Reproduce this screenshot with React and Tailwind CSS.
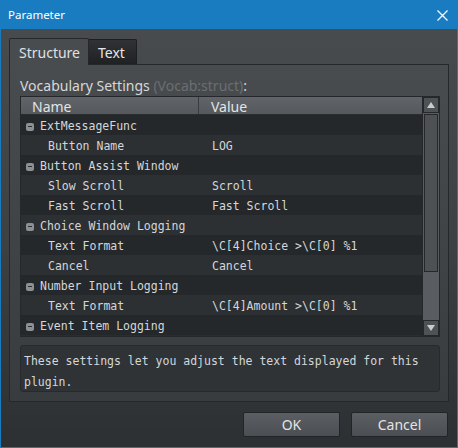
import React from "react";

const ROWS = [
  { group: true, name: "ExtMessageFunc" },
  { name: "Button Name", value: "LOG" },
  { group: true, name: "Button Assist Window" },
  { name: "Slow Scroll", value: "Scroll" },
  { name: "Fast Scroll", value: "Fast Scroll" },
  { group: true, name: "Choice Window Logging" },
  { name: "Text Format", value: "\\C[4]Choice >\\C[0] %1" },
  { name: "Cancel", value: "Cancel" },
  { group: true, name: "Number Input Logging" },
  { name: "Text Format", value: "\\C[4]Amount >\\C[0] %1" },
  { group: true, name: "Event Item Logging" },
];

const sans = { fontFamily: '"Noto Sans", "Open Sans", sans-serif' };
const mono = { fontFamily: '"DejaVu Sans Mono", "Liberation Mono", monospace' };

const Minus = () => (
  <span className="w-[8px] h-[8px] rounded-[2px] bg-[#8d9093] flex items-center justify-center mr-[6px]">
    <span className="w-[4px] h-[1px] bg-[#2a2d30]" />
  </span>
);

export default function App() {
  return (
    <div
      className="w-[458px] h-[448px] border border-[#1a7cc0] flex flex-col overflow-hidden"
      style={sans}
    >
      {/* Title bar */}
      <div className="h-[28px] bg-[#1a7cc0] flex items-center justify-between pl-[7px] pr-[9px]">
        <span className="text-white text-[11.5px]">Parameter</span>
        <svg width="11" height="11" viewBox="0 0 11 11">
          <path d="M0.5 0.5l10 10M10.5 0.5l-10 10" stroke="#fff" strokeWidth="1.2" />
        </svg>
      </div>

      {/* Body */}
      <div className="flex-1 flex flex-col pt-[9px] pl-[8px] pr-[8px] bg-gradient-to-b from-[#484b4e] via-[#3e4144] to-[#2d3033]">
        {/* Tabs */}
        <div className="flex items-end h-[26px] relative z-10">
          <div className="h-[27px] w-[80px] border border-b-0 border-[#25272a] rounded-t-[2px] bg-[#494c4f] flex items-center pl-[9px] text-[14px] text-[#dfe1e3] mb-[-1px]">
            Structure
          </div>
          <div className="h-[25px] w-[48px] border border-l-0 border-b-0 border-[#1c1e20] rounded-tr-[2px] bg-gradient-to-b from-[#303235] to-[#1f2123] flex items-center pl-[9px] text-[14px] text-[#e4e6e8]">
            Text
          </div>
        </div>

        {/* Pane */}
        <div className="border border-[#25272a] pt-[11px] pl-[10px] pr-[8px] pb-[9px] bg-gradient-to-b from-[#494c4f] to-[#393c3f]">
          <div className="h-[20px] leading-[20px] text-[14px] text-[#d6d8da]">
            Vocabulary Settings <span className="text-[#6b6e71]">(Vocab:struct)</span>:
          </div>

          {/* Table */}
          <div className="h-[241px] flex border border-[#25272a] bg-[#2a2d30]">
            <div className="flex-1 flex flex-col">
              <div className="h-[18px] flex bg-gradient-to-b from-[#61656a] to-[#55595d] border-b border-[#2a2c2e] text-[14px] text-[#e2e4e6] leading-[19px]">
                <div className="w-[178px] border-r border-[#3a3d40] pl-[11px]">Name</div>
                <div className="flex-1 pl-[12px]">Value</div>
              </div>
              <div className="flex-1 text-[11.5px] text-[#d4d7da]" style={mono}>
                {ROWS.map((r, i) => (
                  <div
                    key={i}
                    className={`h-[20px] flex items-center pt-[3px] ${i % 2 === 0 ? "bg-[#25282b]" : "bg-[#2d3033]"}`}
                  >
                    {r.group ? (
                      <div className="flex items-center pl-[5px]">
                        <Minus />
                        <span>{r.name}</span>
                      </div>
                    ) : (
                      <>
                        <div className="w-[179px] pl-[27px] whitespace-pre">{r.name}</div>
                        <div className="flex-1 pl-[12px] whitespace-pre">{r.value}</div>
                      </>
                    )}
                  </div>
                ))}
              </div>
            </div>

            {/* Scrollbar */}
            <div className="w-[17px] flex flex-col border-l border-[#25272a] bg-[#3a3d40]">
              <div className="h-[16px] border border-[#25272a] bg-[#4e5255] flex items-center justify-center">
                <svg width="8" height="6" viewBox="0 0 8 6">
                  <path d="M4 0L8 6H0Z" fill="#c9cccf" />
                </svg>
              </div>
              <div className="flex-1 flex flex-col bg-[#595d61] pt-[1px]">
                <div className="h-[158px] border border-[#25272a] bg-[#4d5154] mx-[1px]" />
              </div>
              <div className="h-[16px] border border-[#25272a] bg-[#4e5255] flex items-center justify-center">
                <svg width="8" height="6" viewBox="0 0 8 6">
                  <path d="M0 0H8L4 6Z" fill="#c9cccf" />
                </svg>
              </div>
            </div>
          </div>

          {/* Description */}
          <div
            className="mt-[8px] h-[47px] border border-[#27292c] rounded-[3px] bg-[#303336] pl-[3px] pt-[5px] text-[11.5px] leading-[21px] text-[#d4d7da]"
            style={mono}
          >
            These settings let you adjust the text displayed for this
            <br />
            plugin.
          </div>
        </div>

        {/* Buttons */}
        <div className="flex justify-end gap-[11px] pt-[10px] pr-[1px]">
          <button className="w-[97px] h-[25px] border border-[#222427] rounded-[2px] bg-gradient-to-b from-[#5b5f63] to-[#4b4e52] text-[14px] text-[#e2e4e6]">
            OK
          </button>
          <button className="w-[97px] h-[25px] border border-[#222427] rounded-[2px] bg-gradient-to-b from-[#5b5f63] to-[#4b4e52] text-[14px] text-[#e2e4e6]">
            Cancel
          </button>
        </div>
      </div>
    </div>
  );
}
